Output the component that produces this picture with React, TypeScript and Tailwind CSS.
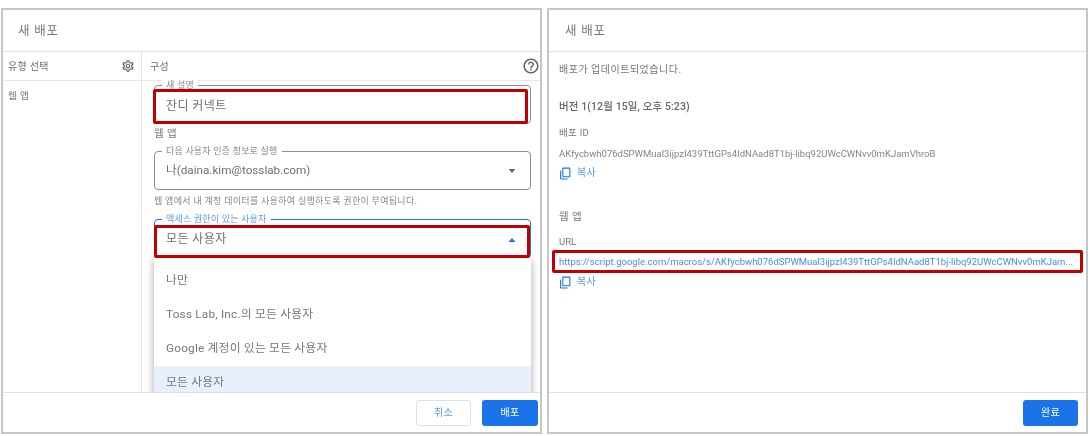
import React from 'react';

const FONT = "font-['Roboto','Noto_Sans_CJK_KR',sans-serif]";

const OutlineField: React.FC<{
  label: string;
  active?: boolean;
  className?: string;
  children?: React.ReactNode;
}> = ({ label, active, className, children }) => (
  <div
    className={`relative flex h-[39px] items-center rounded-[4px] border pl-[11px] pr-[12px] pt-[1px] text-[12px] tracking-[0.4px] text-[#6e6e6e] ${
      active ? 'border-[#1a73e8]' : 'border-[#8f8f8f]'
    } ${className ?? ''}`}
  >
    <span
      className={`absolute left-[7px] top-[-6px] bg-white px-[4px] text-[9px] leading-[11px] tracking-[0.2px] ${
        active ? 'text-[#5a9aec]' : 'text-[#888]'
      }`}
    >
      {label}
    </span>
    {children}
  </div>
);

const Arrow: React.FC<{ up?: boolean }> = ({ up }) => (
  <svg width="10" height="5" viewBox="0 0 10 5" className="ml-auto mr-[1px]">
    <path d={up ? 'M1.5 5 L5 1 L8.5 5 Z' : 'M1.5 0 L5 4 L8.5 0 Z'} fill={up ? '#1a73e8' : '#666'} />
  </svg>
);

const RedBox: React.FC<{ className: string }> = ({ className }) => (
  <div className={`pointer-events-none absolute rounded-[2px] border-[3px] border-[#c00000] ${className}`} />
);

const GearIcon = () => (
  <svg width="14" height="14" viewBox="0 0 24 24" fill="#5f6368">
    <path d="M19.43 12.98c.04-.32.07-.64.07-.98 0-.34-.03-.66-.07-.98l2.11-1.65c.19-.15.24-.42.12-.64l-2-3.46c-.09-.16-.26-.25-.44-.25-.06 0-.12.01-.17.03l-2.49 1c-.52-.4-1.08-.73-1.69-.98l-.38-2.65C14.46 2.18 14.25 2 14 2h-4c-.25 0-.46.18-.49.42l-.38 2.65c-.61.25-1.17.59-1.69.98l-2.49-1c-.06-.02-.12-.03-.18-.03-.17 0-.34.09-.43.25l-2 3.46c-.13.22-.07.49.12.64l2.11 1.65c-.04.32-.07.65-.07.98 0 .33.03.66.07.98l-2.11 1.65c-.19.15-.24.42-.12.64l2 3.46c.09.16.26.25.44.25.06 0 .12-.01.17-.03l2.49-1c.52.4 1.08.73 1.69.98l.38 2.65c.03.24.24.42.49.42h4c.25 0 .46-.18.49-.42l.38-2.65c.61-.25 1.17-.59 1.69-.98l2.49 1c.06.02.12.03.18.03.17 0 .34-.09.43-.25l2-3.46c.12-.22.07-.49-.12-.64l-2.11-1.65zm-1.98-1.71c.04.31.05.52.05.73 0 .21-.02.43-.05.73l-.14 1.13.89.7 1.08.84-.7 1.21-1.27-.51-1.04-.42-.9.68c-.43.32-.84.56-1.25.73l-1.06.43-.16 1.13-.2 1.35h-1.4l-.19-1.35-.16-1.13-1.06-.43c-.43-.18-.83-.41-1.23-.71l-.91-.7-1.06.43-1.27.51-.7-1.21 1.08-.84.89-.7-.14-1.13c-.03-.31-.05-.54-.05-.74s.02-.43.05-.73l.14-1.13-.89-.7-1.08-.84.7-1.21 1.27.51 1.04.42.9-.68c.43-.32.84-.56 1.25-.73l1.06-.43.16-1.13.2-1.35h1.39l.19 1.35.16 1.13 1.06.43c.43.18.83.41 1.23.71l.91.7 1.06-.43 1.27-.51.7 1.21-1.07.85-.89.7.14 1.13zM12 8c-2.21 0-4 1.79-4 4s1.79 4 4 4 4-1.79 4-4-1.79-4-4-4zm0 6c-1.1 0-2-.9-2-2s.9-2 2-2 2 .9 2 2-.9 2-2 2z" />
  </svg>
);

const HelpIcon = () => (
  <svg width="18" height="18" viewBox="0 0 24 24" fill="#5f6368">
    <path d="M11 18h2v-2h-2v2zm1-16C6.48 2 2 6.48 2 12s4.48 10 10 10 10-4.48 10-10S17.52 2 12 2zm0 18c-4.41 0-8-3.59-8-8s3.59-8 8-8 8 3.59 8 8-3.59 8-8 8zm0-14c-2.21 0-4 1.79-4 4h2c0-1.1.9-2 2-2s2 .9 2 2c0 2-3 1.75-3 5h2c0-2.25 3-2.5 3-5 0-2.21-1.79-4-4-4z" />
  </svg>
);

// material content_copy, flipped: the front page sits top right in the picture
const CopyIcon = () => (
  <svg width="13" height="13" viewBox="0 0 24 24" className="-scale-y-100" fill="#1a73e8">
    <path d="M16 1H4c-1.1 0-2 .9-2 2v14h2V3h12V1zm3 4H8c-1.1 0-2 .9-2 2v14c0 1.1.9 2 2 2h11c1.1 0 2-.9 2-2V7c0-1.1-.9-2-2-2zm0 16H8V7h11v14z" />
  </svg>
);

const CopyLink: React.FC<{ className?: string }> = ({ className }) => (
  <div className={`flex items-center gap-[5px] text-[10px] leading-[14px] tracking-[0.4px] text-[#5a9aec] ${className ?? ''}`}>
    <CopyIcon />
    <span>복사</span>
  </div>
);

const MenuItem: React.FC<{ label: string; selected?: boolean }> = ({ label, selected }) => (
  <div className={`flex h-[34px] items-center px-[12px] text-[11.8px] tracking-[0.2px] text-[#777] ${selected ? 'bg-[#e8f0fe]' : ''}`}>
    {label}
  </div>
);

const DeployForm = () => (
  <div className="relative flex h-[426px] w-[541px] flex-col border-2 border-[#c6c6c6] bg-white">
    <div className="flex h-[42px] shrink-0 items-center border-b border-[#e0e0e0] pl-[15px] pt-[2px] text-[12.5px] tracking-[0.8px] text-[#777]">
      새 배포
    </div>

    <div className="flex min-h-0 flex-1">
      <div className="w-[139px] shrink-0 border-r border-[#e0e0e0]">
        <div className="flex h-[29px] items-center justify-between border-b border-[#e8e8e8] pl-[5px] pr-[6px] text-[10px] tracking-[0.3px] text-[#6e6e6e]">
          <span>유형 선택</span>
          <GearIcon />
        </div>
        <div className="pl-[5px] pt-[9px] text-[9.5px] leading-[12px] tracking-[0.4px] text-[#777]">웹 앱</div>
      </div>

      <div className="relative min-w-0 flex-1 overflow-hidden">
        <div className="flex h-[29px] items-center justify-between border-b border-[#e8e8e8] pl-[8px] text-[10px] tracking-[0.3px] text-[#6e6e6e]">
          <span>구성</span>
          <HelpIcon />
        </div>

        <div className="pl-[12px] pr-[9px] pt-[4px]">
          <OutlineField label="새 설명">
            <span className="pt-[2px]">잔디 커넥트</span>
          </OutlineField>
          <div className="mt-[3px] h-[14px] text-[10.5px] leading-[14px] tracking-[0.4px] text-[#777]">웹 앱</div>
          <OutlineField label="다음 사용자 인증 정보로 실행" className="mt-[10px]">
            <span className="text-[11.7px] tracking-normal">나(daina.kim@tosslab.com)</span>
            <Arrow />
          </OutlineField>
          <div className="mt-[5px] h-[12px] whitespace-nowrap text-[9px] leading-[12px] tracking-[0.3px] text-[#888]">
            웹 앱에서 내 계정 데이터를 사용하여 실행하도록 권한이 부여됩니다.
          </div>
          <OutlineField label="액세스 권한이 있는 사용자" active className="mt-[12px]">
            <span>모든 사용자</span>
            <Arrow up />
          </OutlineField>
        </div>

        <div className="absolute left-[12px] right-[9px] top-[206px] bg-white pt-[6px] shadow-[0_2px_8px_rgba(0,0,0,0.35)]">
          <MenuItem label="나만" />
          <MenuItem label="Toss Lab, Inc.의 모든 사용자" />
          <MenuItem label="Google 계정이 있는 모든 사용자" />
          <MenuItem label="모든 사용자" selected />
        </div>
      </div>
    </div>

    <div className="relative flex h-[40px] shrink-0 items-center justify-end gap-[11px] border-t border-[#e0e0e0] bg-white pr-[2px]">
      <button className="h-[26px] w-[55px] rounded-[3px] border border-[#e0e0e0] bg-white text-[10px] tracking-[0.4px] text-[#5a9aec]">
        취소
      </button>
      <button className="h-[26px] w-[56px] rounded-[3px] bg-[#1a73e8] text-[10px] tracking-[0.4px] text-white">배포</button>
    </div>

    <RedBox className="left-[150px] top-[79px] h-[35px] w-[375px]" />
    <RedBox className="left-[151px] top-[215px] h-[33px] w-[376px]" />
  </div>
);

const DeployResult = () => (
  <div className="relative flex h-[426px] w-[541px] flex-col border-2 border-[#c6c6c6] bg-white">
    <div className="flex h-[42px] shrink-0 items-center border-b border-[#e0e0e0] pl-[16px] pt-[2px] text-[12.5px] tracking-[0.8px] text-[#777]">
      새 배포
    </div>

    <div className="min-h-0 flex-1 pl-[10px] pr-[9px] text-[#777]">
      <div className="mt-[12px] h-[12px] text-[10px] leading-[12px] tracking-[0.5px]">배포가 업데이트되었습니다.</div>
      <div className="mt-[25px] h-[12px] text-[10.5px] font-medium leading-[12px] tracking-[0.1px] text-[#666]">
        버전 1(12월 15일, 오후 5:23)
      </div>
      <div className="mt-[14px] h-[12px] text-[9.5px] leading-[12px] tracking-[0.3px]">배포 ID</div>
      <div className="mt-[9px] h-[12px] whitespace-nowrap text-[9.5px] leading-[12px] text-[#858585]">
        AKfycbwh076dSPWMual3ijpzI439TttGPs4IdNAad8T1bj-libq92UWcCWNvv0mKJamVhroB
      </div>
      <CopyLink className="mt-[6px]" />
      <div className="mt-[30px] h-[14px] text-[10.5px] leading-[14px] tracking-[0.4px]">웹 앱</div>
      <div className="mt-[12px] h-[12px] text-[9.5px] leading-[12px]">URL</div>
      <div className="mt-[7px] h-[14px] whitespace-nowrap text-[9.5px] leading-[14px] text-[#4a8af0]">
        https://script.google.com/macros/s/AKfycbwh076dSPWMual3ijpzI439TttGPs4IdNAad8T1bj-libq92UWcCWNvv0mKJam...
      </div>
      <CopyLink className="mt-[6px]" />
    </div>

    <div className="flex h-[40px] shrink-0 items-center justify-end border-t border-[#e0e0e0] pr-[8px]">
      <button className="h-[26px] w-[55px] rounded-[3px] bg-[#1a73e8] text-[10px] tracking-[0.4px] text-white">완료</button>
    </div>

    <RedBox className="left-[3px] top-[240px] h-[23px] w-[531px]" />
  </div>
);

export default function App() {
  return (
    <div className={`flex h-[436px] w-[1090px] gap-[5px] overflow-hidden bg-white pl-[1px] pt-[8px] blur-[0.4px] ${FONT}`}>
      <DeployForm />
      <DeployResult />
    </div>
  );
}
